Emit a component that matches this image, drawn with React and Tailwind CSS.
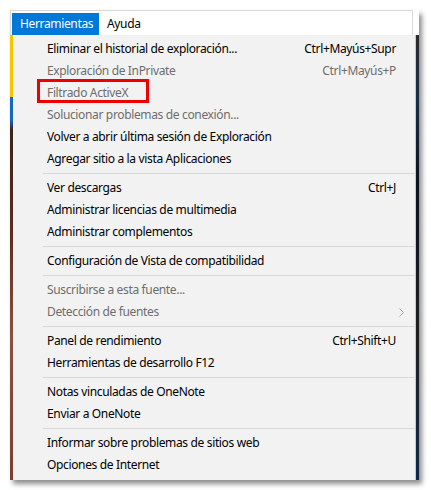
import React from "react";

const groups = [
  [
    { t: "Eliminar el historial de exploración...", s: "Ctrl+Mayús+Supr" },
    { t: "Exploración de InPrivate", s: "Ctrl+Mayús+P", d: true },
    { t: "Filtrado ActiveX", d: true, box: true },
    { t: "Solucionar problemas de conexión...", d: true },
    { t: "Volver a abrir última sesión de Exploración" },
    { t: "Agregar sitio a la vista Aplicaciones" },
  ],
  [
    { t: "Ver descargas", s: "Ctrl+J" },
    { t: "Administrar licencias de multimedia" },
    { t: "Administrar complementos" },
  ],
  [{ t: "Configuración de Vista de compatibilidad" }],
  [
    { t: "Suscribirse a esta fuente...", d: true },
    { t: "Detección de fuentes", d: true, sub: true },
  ],
  [
    { t: "Panel de rendimiento", s: "Ctrl+Shift+U" },
    { t: "Herramientas de desarrollo F12" },
  ],
  [{ t: "Notas vinculadas de OneNote" }, { t: "Enviar a OneNote" }],
  [{ t: "Informar sobre problemas de sitios web" }, { t: "Opciones de Internet" }],
];

function Row({ it }) {
  return (
    <div
      className={
        "relative flex items-center h-[22px] pl-[34px] pr-[19px] " +
        (it.d ? "text-[#6d6d6d]" : "text-black")
      }
    >
      <span className="relative">
        {it.t}
        {it.box && (
          <span className="absolute left-[-10px] top-[-8px] w-[112px] h-[24px] border-[3px] border-[#ee0000]" />
        )}
      </span>
      <span className="ml-auto">{it.s}</span>
      {it.sub && (
        <svg className="absolute right-[11px] top-[7px]" width="5" height="9" viewBox="0 0 5 9">
          <path d="M0.5 0.5 L4.5 4.5 L0.5 8.5" fill="none" stroke="#a8a8a8" strokeWidth="1" />
        </svg>
      )}
    </div>
  );
}

export default function App() {
  return (
    <div
      className="w-[431px] h-[490px] bg-white pt-[10px] pl-[10px] text-[12px] leading-none tracking-[-0.35px]"
      style={{ fontFamily: '"Segoe UI", "Noto Sans", "Open Sans", sans-serif' }}
    >
      <div className="w-[409px] shadow-[3px_4px_5px_rgba(0,0,0,0.45)]">
        <div className="h-[25px] bg-white border-t border-l border-r border-[#d9d9d9] w-[403px] flex items-start pt-[2px] pl-[1px]">
          <div className="h-[22px] w-[87px] bg-[#0078d7] text-white flex items-center pl-[8px]">
            Herramientas
          </div>
          <div className="h-[22px] flex items-center pl-[8px] text-black">Ayuda</div>
        </div>
        <div className="flex">
          <div className="w-[3px] bg-[linear-gradient(to_bottom,#f4c400_0px,#f4c400_62px,#1468c0_62px,#1468c0_85px,#3a2418_95px,#5a3020_200px,#8a5040_300px,#7a4030_445px)]" />
          <div className="flex-1 bg-[#f2f2f2] pt-[3px] pb-[4px] border-r border-[#c8c8c8]">
            {groups.map((g, gi) => (
              <div key={gi}>
                {gi > 0 && (
                  <div className="h-[7px] flex items-center pl-[30px]">
                    <div className="h-px w-full bg-[#d7d7d7]" />
                  </div>
                )}
                {g.map((it, i) => (
                  <Row key={i} it={it} />
                ))}
              </div>
            ))}
          </div>
          <div className="w-[3px] bg-[linear-gradient(to_bottom,#2a2a2a_0px,#1a2f4a_60px,#0b1420_150px,#202020_300px,#0e2a48_440px)]" />
        </div>
      </div>
    </div>
  );
}
